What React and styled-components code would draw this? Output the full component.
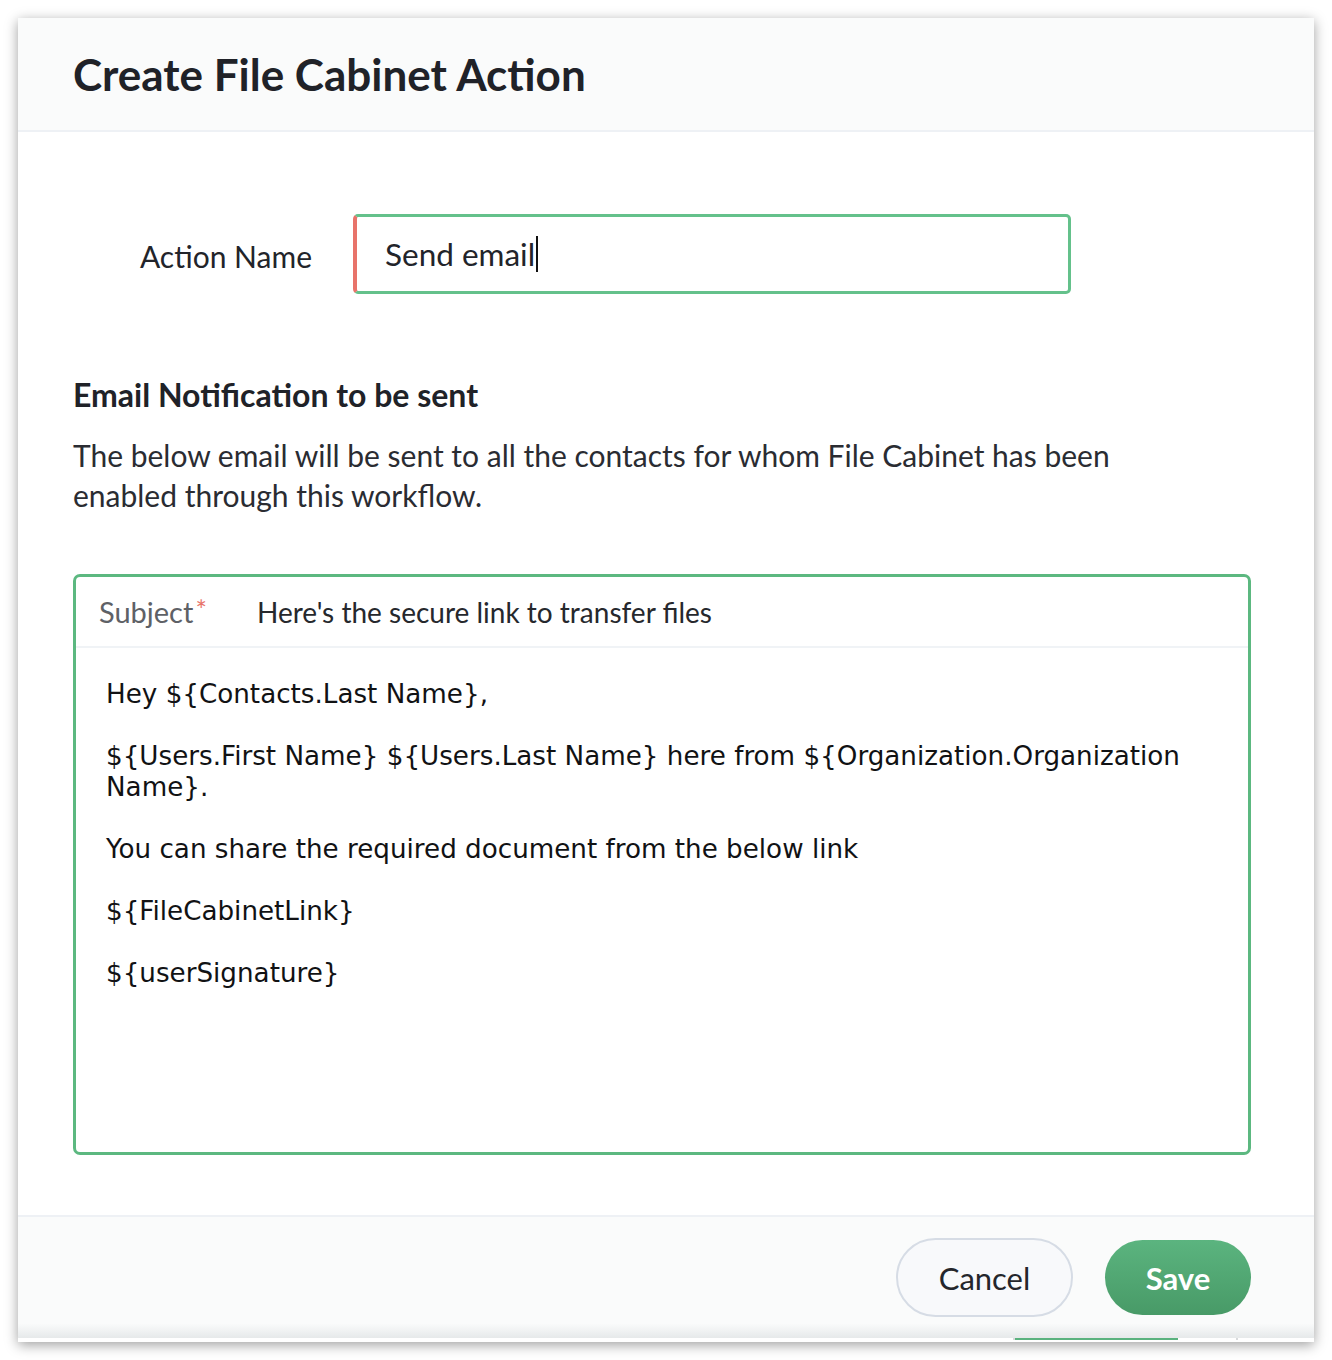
import React from "react";
import styled, { createGlobalStyle } from "styled-components";

const Global = createGlobalStyle`
  html, body { margin: 0; padding: 0; background: #ffffff; }
  body { font-family: Lato, "Noto Sans", sans-serif; color: #22242a; }
`;

const Page = styled.div`
  padding: 18px 18px 18px 18px;
  width: 1332px;
  box-sizing: border-box;
`;

const Dialog = styled.div`
  width: 1296px;
  height: 1324px;
  background: #ffffff;
  box-shadow: 0 3px 12px rgba(0, 0, 0, 0.38);
  display: flex;
  flex-direction: column;
`;

const Header = styled.div`
  height: 112px;
  background: #fafbfb;
  border-bottom: 2px solid #eef1f5;
  display: flex;
  align-items: center;
  padding-left: 55px;
  box-sizing: content-box;
`;

const Title = styled.h1`
  margin: 0;
  font-family: Lato, sans-serif;
  font-weight: 700;
  font-size: 44px;
  color: #202228;
`;

const Body = styled.div`
  flex: 1;
  padding: 82px 63px 0 55px;
  display: flex;
  flex-direction: column;
`;

const FieldRow = styled.div`
  display: flex;
  align-items: center;
  gap: 41px;
`;

const FieldLabel = styled.label`
  width: 239px;
  text-align: right;
  font-size: 30px;
  color: #22242a;
  padding-top: 4px;
`;

const TextInput = styled.div`
  width: 718px;
  height: 80px;
  box-sizing: border-box;
  border: 3px solid #64c18b;
  border-left: 4px solid #e8736a;
  border-radius: 5px;
  display: flex;
  align-items: center;
  padding-left: 28px;
  font-size: 31.5px;
  color: #22242a;
`;

const Caret = styled.span`
  display: inline-block;
  width: 2px;
  height: 36px;
  background: #111;
  margin-left: 1px;
`;

const SectionTitle = styled.h2`
  margin: 83px 0 0 0;
  font-size: 32px;
  font-weight: 700;
  line-height: 36px;
  color: #202228;
`;

const Description = styled.p`
  margin: 22px 0 0 0;
  font-size: 30px;
  line-height: 40px;
  color: #2a2c32;
  max-width: 1080px;
`;

const EmailBox = styled.div`
  margin-top: 59px;
  height: 581px;
  box-sizing: border-box;
  border: 3px solid #5cb880;
  border-radius: 7px;
  display: flex;
  flex-direction: column;
`;

const SubjectRow = styled.div`
  height: 69px;
  border-bottom: 2px solid #f0f3f6;
  display: flex;
  align-items: center;
  padding-left: 23px;
  font-size: 28px;
`;

const SubjectLabel = styled.span`
  color: #5e6166;
  width: 158px;
  flex-shrink: 0;
  font-size: 29px;
`;

const Required = styled.span`
  color: #e8736a;
  font-size: 27px;
  position: relative;
  top: -3px;
  margin-left: 2px;
`;

const SubjectValue = styled.span`
  color: #26282d;
`;

const MessageBody = styled.div`
  padding: 31px 30px 0 30px;
  font-family: "DejaVu Sans", Verdana, sans-serif;
  font-size: 26.2px;
  line-height: 31px;
  color: #111214;
`;

const Para = styled.p`
  margin: 0 0 31px 0;
`;

const Footer = styled.div`
  height: 121px;
  border-top: 2px solid #eef1f5;
  background: linear-gradient(to bottom, #fafbfb 0%, #fafbfb 88%, #e6e9ea 100%);
  display: flex;
  align-items: center;
  justify-content: flex-end;
  gap: 32px;
  padding-right: 63px;
`;

const Button = styled.button`
  border-radius: 40px;
  font-family: Lato, sans-serif;
  font-size: 31px;
  cursor: pointer;
  box-sizing: border-box;
`;

const CancelButton = styled(Button)`
  width: 177px;
  height: 79px;
  background: #f8f9fb;
  border: 2px solid #d6dce5;
  color: #24262b;
  font-weight: 400;
`;

const SaveButton = styled(Button)`
  width: 146px;
  height: 75px;
  border: none;
  background: linear-gradient(to bottom, #5bb47f, #489a67);
  color: #ffffff;
  font-weight: 700;
`;

const BottomStrip = styled.div`
  height: 4px;
  background: #ffffff;
  display: flex;
  align-items: flex-start;
`;

const Tab = styled.div`
  width: ${(p) => p.$w}px;
  height: 2px;
  margin-left: ${(p) => p.$ml}px;
  background: ${(p) => p.$c};
`;

export default function App() {
  return (
    <>
      <Global />
      <Page>
        <Dialog>
          <Header>
            <Title>Create File Cabinet Action</Title>
          </Header>
          <Body>
            <FieldRow>
              <FieldLabel>Action Name</FieldLabel>
              <TextInput>
                Send email
                <Caret />
              </TextInput>
            </FieldRow>
            <SectionTitle>Email Notification to be sent</SectionTitle>
            <Description>
              The below email will be sent to all the contacts for whom File Cabinet has been
              enabled through this workflow.
            </Description>
            <EmailBox>
              <SubjectRow>
                <SubjectLabel>
                  Subject<Required>*</Required>
                </SubjectLabel>
                <SubjectValue>Here's the secure link to transfer files</SubjectValue>
              </SubjectRow>
              <MessageBody>
                <Para>Hey ${"{"}Contacts.Last Name{"}"},</Para>
                <Para>
                  ${"{"}Users.First Name{"}"} ${"{"}Users.Last Name{"}"} here from ${"{"}Organization.Organization Name{"}"}.
                </Para>
                <Para>You can share the required document from the below link</Para>
                <Para>${"{"}FileCabinetLink{"}"}</Para>
                <Para>${"{"}userSignature{"}"}</Para>
              </MessageBody>
            </EmailBox>
          </Body>
          <Footer>
            <CancelButton>Cancel</CancelButton>
            <SaveButton>Save</SaveButton>
          </Footer>
          <BottomStrip>
            <Tab $ml={995} $w={2} $c="#d8dadc" />
            <Tab $ml={0} $w={163} $c="#5ab27e" />
            <Tab $ml={58} $w={2} $c="#d8dadc" />
          </BottomStrip>
        </Dialog>
      </Page>
    </>
  );
}
